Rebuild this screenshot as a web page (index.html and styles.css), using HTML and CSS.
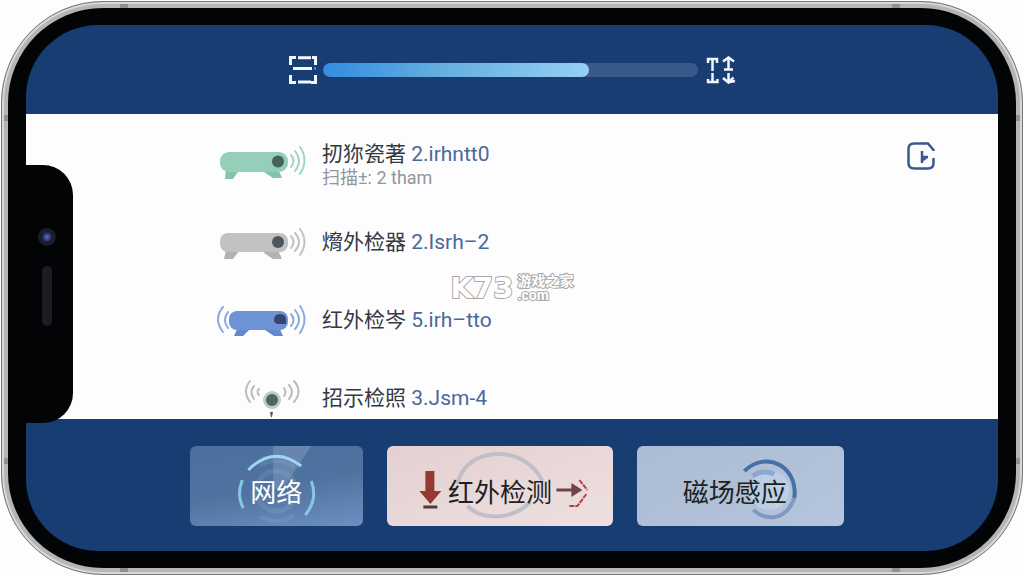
FILE: index.html
```
<!DOCTYPE html>
<html lang="zh-CN">
<head>
    <meta charset="UTF-8">
    <meta name="viewport" content="width=device-width, initial-scale=1.0">
    <title>红外检测</title>
    <link rel="stylesheet" href="styles.css">
</head>
<body>
    <div class="phone">
        <div class="bezel">
            <div class="screen">
                <header class="topbar">
                    <svg class="scan-icon" viewBox="0 0 28 28" fill="none" stroke="#f2f6ff" stroke-width="3" aria-hidden="true">
                        <path d="M1.500 9V1.500H7M9 1.800h13M23 1.500h3.500V9M4 12.500h19M1.500 19v7.500H7M9 26h13M22 26.500h4.500V19"/>
                        <path d="M25 12.500h2" stroke="#5ba9e8" stroke-width="2"/>
                    </svg>
                    <progress class="scan-progress" value="71" max="100" aria-label="扫描"></progress>
                    <svg class="range-icon" viewBox="0 0 32 30" fill="none" stroke="#f2f6ff" stroke-width="2.500" aria-hidden="true">
                        <path d="M4 8V4h9v4M8.500 4v12M24.500 1.500v14M19 6.500l5.500-4 5.500 4M20 14.500h9M8.500 18v9M4 24v3h9.500v-3M24.500 18v9M19 23l5.500 4.500 5-5M26 27l5-1"/>
                    </svg>
                </header>

                <main class="content">
                    <ul class="devices">
                        <li class="device">
                            <svg class="device-icon" viewBox="0 0 88 38" aria-hidden="true">
                                <path fill="#82c3aa" d="M8 22h14l-7 10H7zM47 22h13l4 9h-9l-9-6z"/>
                                <rect x="2" y="5" width="68" height="20" rx="9" fill="#95cfb9"/>
                                <circle cx="60" cy="14.500" r="6" fill="#45625c"/>
                                <path fill="none" stroke="#a3d4c1" stroke-width="2" stroke-linecap="round" d="M73 8q5 6 0 12M77 4q8 10 0 20M82 0q9 13 0 27"/>
                            </svg>
                            <div class="device-text">
                                <div class="device-name">扨狝瓷著 <span>2.irhntt0</span></div>
                                <div class="device-note">扫描±: 2 tham</div>
                            </div>
                        </li>
                        <li class="device">
                            <svg class="device-icon" viewBox="0 0 88 38" aria-hidden="true">
                                <path fill="#b3b3b3" d="M8 20h14l-7 9H6zM47 20h13l4 9h-9l-9-6z"/>
                                <rect x="2" y="3" width="68" height="19" rx="8" fill="#c2c2c2"/>
                                <circle cx="60" cy="12" r="6" fill="#4f5560"/>
                                <path fill="none" stroke="#c2c2c2" stroke-width="2" stroke-linecap="round" d="M73 6q5 6 0 12M77 3q8 9 0 18M82-1q9 13 0 26"/>
                            </svg>
                            <div class="device-text">
                                <div class="device-name">熁外检器 <span>2.Isrh–2</span></div>
                            </div>
                        </li>
                        <li class="device">
                            <svg class="device-icon" viewBox="0 0 88 38" aria-hidden="true">
                                <path fill="#6289cc" d="M20 19h14l-9 9h-9zM48 19h13l4 9h-9l-9-6z"/>
                                <rect x="11" y="3" width="59" height="19" rx="8" fill="#6d93d4"/>
                                <path fill="#34466b" d="M56 12q0-6 6-6 6 0 6 6v4h-7q-5 0-5-4z"/>
                                <path fill="none" stroke="#8aabdf" stroke-width="2" stroke-linecap="round" d="M73 6q5 6 0 12M77 2q8 10 0 19M82-2q9 13 0 27M10 4q-6 8 0 16M5-1q-10 12 0 25"/>
                            </svg>
                            <div class="device-text">
                                <div class="device-name">红外检岑 <span>5.irh–tto</span></div>
                            </div>
                        </li>
                        <li class="device">
                            <svg class="device-icon" viewBox="0 0 88 38" aria-hidden="true">
                                <circle cx="54" cy="14" r="9" fill="#c3c8c6"/>
                                <circle cx="54" cy="14" r="6" fill="#4b675f"/>
                                <path fill="#555" d="M52 26h3l-1 5h-1z"/>
                                <path fill="none" stroke="#bcbcbc" stroke-width="2" stroke-linecap="round" d="M41 3q-3 3 0 6M36 0q-5 6 0 13M32-5q-8 10 0 21M66 2q3 4 0 8M71-1q6 7 0 14M76-5q9 10 0 21"/>
                            </svg>
                            <div class="device-text">
                                <div class="device-name">招示检照 <span>3.Jsm-4</span></div>
                            </div>
                        </li>
                    </ul>
                    <button type="button" class="history" aria-label="历史记录">
                        <svg viewBox="0 0 28 28" fill="none" stroke="#365a90" stroke-width="2.500" aria-hidden="true">
                            <path d="M26.500 9v-1L21 1.500H7Q1.500 1.500 1.500 7v14q0 5.500 6 5.500H21q5.500 0 5.500-5.500v-5M15 9v12M15 15h6M16 18l4-3"/>
                        </svg>
                    </button>
                </main>

                <nav class="modes">
                    <button type="button" class="mode network">
                        <svg class="mode-art" viewBox="0 0 172 80" fill="none" stroke-width="3" aria-hidden="true">
                            <path fill="#fff" opacity=".15" d="M83 0h38L96 38 83 44z"/>
                            <circle cx="86" cy="45" r="20" stroke="#a9c6e6" opacity=".15" stroke-width="5"/>
                            <circle cx="86" cy="45" r="30" stroke="#a9c6e6" opacity=".15" stroke-width="4" stroke-dasharray="36 60" stroke-dashoffset="-28"/>
                            <path stroke="#9bd6ed" d="M58 24q25-25 53-4"/>
                            <path stroke="#85c8e3" d="M52 34q-6 15 1 28M121 35q7 18-6 34"/>
                        </svg>
                        <span>网络</span>
                    </button>
                    <button type="button" class="mode infrared">
                        <svg class="mode-art" viewBox="0 0 226 80" fill="none" aria-hidden="true">
                            <path stroke="#c1bfc6" stroke-width="4" d="M70 38C78 0 137-3 155 35M80 60C95 75 125 74 143 56"/>
                            <path fill="#943a30" d="M38 25h9v20h7L43 58 32 45h6z"/>
                            <path stroke="#4c3b3b" stroke-width="3" d="M36 61h14"/>
                            <path stroke="#704443" stroke-width="3" d="M169 44h17"/>
                            <path fill="#704443" d="M184 37l11 7-11 7z"/>
                            <path stroke="#b5413d" stroke-width="2" d="M192 34l8 10M199 48l-9 12h-9" stroke-dasharray="5 1"/>
                        </svg>
                        <span>红外检测</span>
                    </button>
                    <button type="button" class="mode magnetic">
                        <svg class="mode-art" viewBox="0 0 206 80" fill="none" aria-hidden="true">
                            <circle cx="132" cy="44" r="20" fill="#c1d8ed" opacity=".6"/>
                            <path stroke="#8098c3" stroke-width="4" d="M157 52C149 74 130 76 116 64"/>
                            <path stroke="#476fa8" stroke-width="4" d="M107 25C129 4 161 20 157 52"/>
                            <path stroke="#8fa8d0" stroke-width="5" d="M115 30q11-7 22-2"/>
                        </svg>
                        <span>磁场感应</span>
                    </button>
                </nav>

                <div class="notch">
                    <div class="camera"></div>
                    <div class="speaker"></div>
                </div>
            </div>
        </div>
        <div class="watermark">
            <span class="watermark-logo">K73</span>
            <div class="watermark-site">
                <div>游戏之家</div>
                <div>.com</div>
            </div>
        </div>
    </div>
</body>
</html>
```
FILE: styles.css
```
* { box-sizing: border-box; }
body {
    margin: 0;
    background: #fdfdfd;
    font-family: Roboto, "Noto Sans CJK SC", sans-serif;
}
button {
    font-family: inherit;
    border: 0;
    padding: 0;
    cursor: pointer;
}
.phone {
    position: relative;
    height: calc(100vh - 2px);
    margin: 1px;
    padding: 6px;
    border: 1px solid #777;
    border-radius: 102px;
    /* antenna bands, then the metal rim */
    background:
        linear-gradient(#8d9196, #8d9196) 118px 0 / 8px 7px no-repeat,
        linear-gradient(#8d9196, #8d9196) calc(100% - 122px) 0 / 8px 7px no-repeat,
        linear-gradient(#8d9196, #8d9196) 118px 100% / 8px 7px no-repeat,
        linear-gradient(#8d9196, #8d9196) calc(100% - 122px) 100% / 8px 7px no-repeat,
        linear-gradient(#8d9196, #8d9196) 0 113px / 7px 6px no-repeat,
        linear-gradient(#8d9196, #8d9196) 0 456px / 7px 6px no-repeat,
        linear-gradient(#8d9196, #8d9196) 100% 113px / 7px 6px no-repeat,
        linear-gradient(#8d9196, #8d9196) 100% 456px / 7px 6px no-repeat,
        #b5b5b5;
    box-shadow: inset 0 0 0 2px #d8d8d8;
}
.bezel {
    height: 100%;
    padding: 17px 18px;
    background: #030405;
    border-radius: 95px;
}
.screen {
    position: relative;
    display: flex;
    flex-direction: column;
    height: 100%;
    overflow: hidden;
    border-radius: 72px;
}
.topbar {
    display: flex;
    align-items: center;
    justify-content: center;
    gap: 6px;
    height: 89px;
    background: #183d73;
}
.scan-icon { width: 28px; height: 28px; }
.range-icon { width: 32px; height: 30px; }
.scan-progress {
    appearance: none;
    width: 375px;
    height: 14px;
    border: 0;
    border-radius: 7px;
    overflow: hidden;
    background: #38598a;
}
.scan-progress::-webkit-progress-bar { background: #38598a; }
.scan-progress::-webkit-progress-value {
    border-radius: 7px;
    background: linear-gradient(90deg, #338cdf, #65afe0 45%, #96d0f4);
}
.content {
    display: flex;
    flex: 1;
    align-items: flex-start;
    justify-content: space-between;
    min-height: 0;
    overflow: hidden;
    padding: 28px 63px 0 192px;
    background: #fdfdfe;
}
.devices {
    display: flex;
    flex-direction: column;
    gap: 40px;
    margin: 0;
    padding: 0;
    list-style: none;
}
.device {
    display: flex;
    align-items: center;
    gap: 16px;
}
.device-icon {
    width: 88px;
    height: 38px;
    overflow: visible;
}
.device-text { align-self: flex-start; }
.device-name {
    font-size: 21px;
    line-height: 24px;
    color: #34383f;
    white-space: nowrap;
}
.device-name span { color: #4b679c; }
.device-note {
    font-size: 18px;
    line-height: 24px;
    color: #92959a;
}
.history {
    width: 28px;
    height: 28px;
    background: none;
}
.history svg { display: block; }
.modes {
    display: grid;
    grid-template-columns: 172fr 226fr 206fr;
    gap: 24px;
    height: 132px;
    padding: 27px 154px 25px 164px;
    background: #183d73;
}
.mode {
    position: relative;
    overflow: hidden;
    border-radius: 6px;
    padding-top: 8px;
    font-size: 26px;
    color: #201f22;
}
.mode span { position: relative; }
.mode-art {
    position: absolute;
    inset: 0;
    width: 100%;
    height: 100%;
}
.network {
    color: #fff;
    background: linear-gradient(170deg, #4b6f9f, #50729f 50%, #6b8fc0);
}
.infrared { background: linear-gradient(160deg, #e4d0d1, #eee0e0); }
.magnetic {
    padding-right: 12px;
    background: linear-gradient(150deg, #acbcd2, #b4c5dc);
}
.notch {
    position: absolute;
    top: 140px;
    left: -20px;
    display: flex;
    flex-direction: column;
    align-items: center;
    gap: 20px;
    width: 67px;
    height: 258px;
    padding: 63px 0 0 15px;
    background: #030405;
    border-radius: 0 30px 30px 0;
}
.camera {
    width: 18px;
    height: 18px;
    border: 4px solid #1c1d25;
    border-radius: 50%;
    background: radial-gradient(circle, #6070c0, #202463 65%);
}
.speaker {
    width: 10px;
    height: 60px;
    border-radius: 5px;
    background: #1c1d20;
}
.watermark {
    position: absolute;
    top: 50%;
    left: 50%;
    display: flex;
    align-items: center;
    gap: 4px;
    transform: translate(-50%, -50%);
    color: #fff;
    font-weight: bold;
    white-space: nowrap;
    paint-order: stroke;
    -webkit-text-stroke: 2px #a8a8a8;
}
.watermark-logo {
    font-family: "DejaVu Sans", sans-serif;
    font-size: 29px;
    line-height: 30px;
}
.watermark-site {
    font-size: 14px;
    line-height: 14px;
}
```
